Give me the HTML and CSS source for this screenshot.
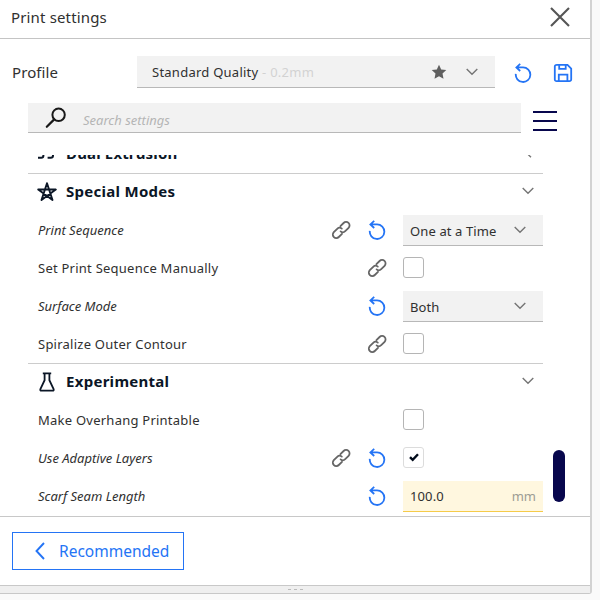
FILE: index.html
```html
<!DOCTYPE html>
<html lang="en">
<head>
<meta charset="utf-8">
<title>Print settings</title>
<link rel="stylesheet" href="styles.css">
</head>
<body>
<svg class="defs" aria-hidden="true">
  <symbol id="chev" viewBox="0 0 14 10"><path d="M1.7 2 7 7.3 12.3 2" fill="none" stroke="currentColor" stroke-width="1.4"/></symbol>
  <symbol id="reset" viewBox="0 0 20 20"><path d="M2.8 10.8A7.3 7.3 0 1 0 10 4.4H3.6M7.2 .9 3.4 4.4l3.8 3.6" fill="none" stroke="currentColor" stroke-width="1.8"/></symbol>
  <symbol id="link" viewBox="0 0 20 20"><g fill="none" stroke="currentColor" stroke-width="1.8" stroke-linecap="round"><path d="M9.4 6.2 12.6 3a3.4 3.4 0 0 1 5 4.8l-3.4 3.4a3.4 3.4 0 0 1-4.6.2"/><path d="M11 13.8 7.8 17a3.4 3.4 0 0 1-5-4.8l3.4-3.4a3.4 3.4 0 0 1 4.6-.2"/></g></symbol>
</svg>
<div class="panel">
  <header class="head">
    <h1>Print settings</h1>
    <svg class="close" viewBox="0 0 20 20"><path d="M1 1 19 19M19 1 1 19" stroke="currentColor" stroke-width="2.1"/></svg>
  </header>
  <div class="profile">
    <span class="profile-label">Profile</span>
    <div class="combo profile-combo">
      <span class="value">Standard Quality <span class="dim">- 0.2mm</span></span>
      <svg class="star" viewBox="0 0 16 16"><path d="M8 .8l2.2 4.7 5.1.6-3.8 3.5 1 5.2L8 12.3l-4.5 2.5 1-5.2L.7 6.1l5.1-.6z" fill="currentColor"/></svg>
      <svg class="chev"><use href="#chev"/></svg>
    </div>
    <svg class="reset"><use href="#reset"/></svg>
    <svg class="save" viewBox="0 0 20 20"><g fill="none" stroke="currentColor" stroke-width="1.8"><path d="M3.3 1.9h11.2l3.7 3.7v10.8a1.8 1.8 0 0 1-1.8 1.8H3.6a1.8 1.8 0 0 1-1.8-1.8V3.6a1.7 1.7 0 0 1 1.7-1.7z"/><path d="M6.2 2v3.8h6.5V2M5.8 18v-6.4h8.6V18"/></g></svg>
  </div>
  <div class="search-row">
    <div class="search">
      <svg class="mag" viewBox="0 0 22 22"><circle cx="13.6" cy="7.8" r="6.2" fill="none" stroke="currentColor" stroke-width="2"/><path d="M9.2 12.4 1.8 19.8" stroke="currentColor" stroke-width="2.2" stroke-linecap="round"/></svg>
      <span>Search settings</span>
    </div>
    <div class="menu"><i></i><i></i><i></i></div>
  </div>
  <div class="body">
    <div class="list">
      <div class="category first">
        <svg class="cat-icon" viewBox="0 0 20 20"><path d="M1 14.8h3.2q2.2 0 2.2-2.2V4M10.6 14.8h3.2q2.2 0 2.2-2.2V4" fill="none" stroke="currentColor" stroke-width="2"/></svg>
        <h2>Dual Extrusion</h2><svg class="chev left"><use href="#chev"/></svg>
      </div>
      <div class="category ruled">
        <svg class="cat-icon" viewBox="0 0 20 20"><path d="M10 1.2 4.5 18 18.8 7.5H1.2L15.5 18z" fill="none" stroke="currentColor" stroke-width="1.9" stroke-linejoin="round"/></svg>
        <h2>Special Modes</h2><svg class="chev"><use href="#chev"/></svg>
      </div>
      <div class="row"><span class="name changed">Print Sequence</span><svg class="link"><use href="#link"/></svg><svg class="reset"><use href="#reset"/></svg><div class="control"><div class="combo"><span class="value">One at a Time</span><svg class="chev"><use href="#chev"/></svg></div></div></div>
      <div class="row"><span class="name">Set Print Sequence Manually</span><svg class="link"><use href="#link"/></svg><div class="control"><div class="check"></div></div></div>
      <div class="row"><span class="name changed">Surface Mode</span><svg class="reset"><use href="#reset"/></svg><div class="control"><div class="combo"><span class="value">Both</span><svg class="chev"><use href="#chev"/></svg></div></div></div>
      <div class="row"><span class="name">Spiralize Outer Contour</span><svg class="link"><use href="#link"/></svg><div class="control"><div class="check"></div></div></div>
      <div class="category ruled">
        <svg class="cat-icon" viewBox="0 0 20 20"><path d="M5.8 1.4h8.4M7.6 1.4v6.8L3.4 17q-.6 1.7 1.1 1.7h11q1.7 0 1.1-1.7L12.4 8.2V1.4" fill="none" stroke="currentColor" stroke-width="1.8"/></svg>
        <h2>Experimental</h2><svg class="chev"><use href="#chev"/></svg>
      </div>
      <div class="row"><span class="name">Make Overhang Printable</span><div class="control"><div class="check"></div></div></div>
      <div class="row"><span class="name changed">Use Adaptive Layers</span><svg class="link"><use href="#link"/></svg><svg class="reset"><use href="#reset"/></svg><div class="control"><div class="check on"><svg viewBox="0 0 10 10"><path d="M1 5.1 3.7 7.8 9 2.2" fill="none" stroke="currentColor" stroke-width="2.4"/></svg></div></div></div>
      <div class="row"><span class="name changed">Scarf Seam Length</span><svg class="reset"><use href="#reset"/></svg><div class="control"><div class="combo field"><span class="value">100.0</span><span class="unit">mm</span></div></div></div>
    </div>
    <div class="scroll"><div class="thumb"></div></div>
  </div>
  <footer class="foot"><div class="button"><svg viewBox="0 0 10 18"><path d="M9 1 1.5 9 9 17" fill="none" stroke="currentColor" stroke-width="1.9"/></svg><span>Recommended</span></div></footer>
  <div class="grip"><i></i><i></i><i></i></div>
</div>
</body>
</html>
```
FILE: styles.css
```css
* { box-sizing: border-box; }
body {
  margin: 0;
  width: 600px;
  height: 600px;
  overflow: hidden;
  background: #fafafa;
  color: #303030;
  font: 13px/18px "Noto Sans", sans-serif;
  white-space: nowrap;
}
svg { display: block; flex: none; }
h1, h2 { margin: 0; }
.defs { display: none; }
.panel {
  width: 592px;
  height: 594px;
  display: flex;
  flex-direction: column;
  background: #fff;
  border-right: 2px solid #d3d3d3;
  border-bottom: 1px solid #c8c8c8;
  border-radius: 0 0 3px 0;
}
.head {
  height: 39px;
  display: flex;
  justify-content: space-between;
  padding: 7px 20px 0 11px;
  border-bottom: 1px solid #c4c4c4;
}
h1 { font-size: 15px; line-height: 20px; font-weight: 400; letter-spacing: 0.15px; }
.close { width: 20px; height: 20px; color: #555; }
.profile {
  height: 64px;
  display: flex;
  align-items: flex-start;
  padding: 17px 0 0 12px;
}
.profile-label { width: 125px; font-size: 15px; line-height: 33px; letter-spacing: 0.1px; }
.combo {
  width: 140px;
  height: 31px;
  display: flex;
  align-items: center;
  padding: 1px 16px 0 7px;
  background: #f2f2f2;
  border-bottom: 1px solid #b8b8b8;
}
.value { flex: 1; letter-spacing: 0.12px; }
.row .combo .value { padding-top: 2px; }
.profile-combo { width: 358px; height: 32px; padding-left: 15px; }
.profile-combo .value { letter-spacing: 0.25px; }
.dim { color: #d2d2d2; }
.star { width: 16px; height: 16px; margin-right: 18px; color: #5f5f5f; }
.chev { width: 14px; height: 10px; color: #757575; }
.reset { width: 20px; height: 20px; color: #2474f5; }
.profile .reset { margin: 7px 0 0 18px; }
.save { width: 20px; height: 20px; margin: 7px 0 0 20px; color: #2474f5; }
.search-row { height: 52px; display: flex; padding-left: 28px; }
.search {
  width: 493px;
  height: 30px;
  display: flex;
  align-items: center;
  padding: 4px 0 0 17px;
  background: #f2f2f2;
  border-bottom: 1px solid #b8b8b8;
  color: #b5b5b5;
  font-style: italic;
}
.mag { width: 22px; height: 22px; margin: -4px 16px 0 0; color: #191919; }
.menu { display: flex; flex-direction: column; gap: 7px; padding: 8px 0 0 12px; }
.menu i { width: 24px; height: 2px; background: #08074d; }
.body { height: 361px; display: flex; padding-left: 28px; overflow: hidden; }
.list { width: 515px; margin-top: -20px; }
.category { height: 38px; display: flex; align-items: center; padding: 0 8px 2px 9px; color: #0b1626; }
.category .chev { margin-top: -2px; }
.ruled { border-top: 1px solid #ccc; }
.cat-icon { width: 20px; height: 20px; margin-right: 9px; }
h2 { flex: 1; margin-top: -1px; font-size: 15px; line-height: 20px; font-weight: 700; letter-spacing: 0.28px; }
.first h2 { margin-top: 0; letter-spacing: 0.15px; }
.left { transform: rotate(90deg); }
.row { height: 38px; display: flex; align-items: center; padding-left: 10px; }
.name { flex: 1; letter-spacing: 0.24px; }
.changed { font-style: italic; letter-spacing: 0; }
.row .link { width: 20px; height: 20px; color: #666; margin-right: 16px; }
.row .reset { margin-right: 16px; }
.control { width: 140px; }
.check {
  width: 21px;
  height: 21px;
  margin-top: -2px;
  border: 1px solid #b5b5b5;
  border-radius: 3px;
  display: grid;
  place-items: center;
}
.check.on { border-color: #dcdcdc; color: #000a1a; }
.check svg { width: 10px; height: 10px; }
.row .field { background: #fff7df; border-color: #f5cb4a; padding-right: 7px; }
.row .field .value { padding-top: 0; }
.unit { color: #9c9c94; }
.scroll { padding: 295px 0 0 10px; }
.thumb { width: 12px; height: 52px; border-radius: 6px; background: #08074d; }
.foot { height: 69px; padding: 15px 0 0 12px; border-top: 1px solid #c8c8c8; }
.button {
  width: 172px;
  height: 38px;
  display: flex;
  align-items: center;
  padding-left: 22px;
  border: 1px solid #2474f5;
  color: #2474f5;
  font-size: 15.5px;
}
.button svg { width: 10px; height: 18px; margin-right: 14px; }
.grip {
  flex: 1;
  display: flex;
  justify-content: center;
  gap: 3px;
  padding-top: 3px;
  background: #efefef;
  border-top: 1px solid #c8c8c8;
}
.grip i { width: 3px; height: 1px; background: #bbb; }
```
